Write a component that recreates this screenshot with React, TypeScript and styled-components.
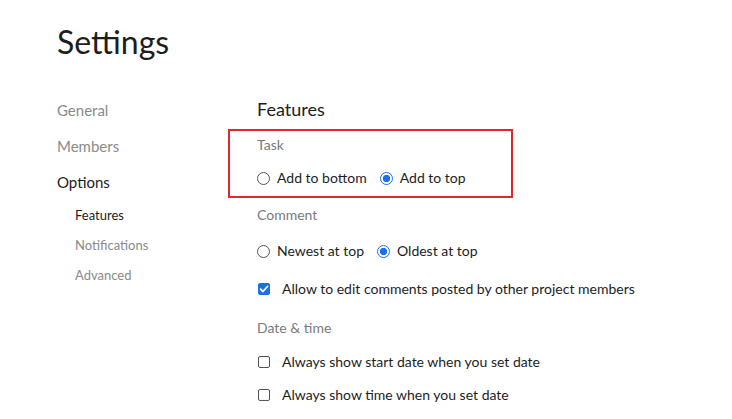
import styled, { createGlobalStyle } from 'styled-components';

const GlobalStyle = createGlobalStyle`
  body {
    margin: 0;
    background: #fff;
    font-family: Lato, "Open Sans", sans-serif;
    color: #222;
  }
`;

const nav = [
  { label: 'General', level: 0 },
  { label: 'Members', level: 0 },
  { label: 'Options', level: 0, active: true },
  { label: 'Features', level: 1, active: true },
  { label: 'Notifications', level: 1 },
  { label: 'Advanced', level: 1 },
];

const App = () => {
  return (
    <>
      <GlobalStyle />
      <Page>
        <Title>Settings</Title>
        <Layout>
          <Sidebar>
            {nav.map((item) => (
              <NavItem key={item.label} $level={item.level} $active={!!item.active}>
                {item.label}
              </NavItem>
            ))}
          </Sidebar>

          <Main>
            <Heading>Features</Heading>

            <Group $highlight $gap={14}>
              <GroupLabel>Task</GroupLabel>
              <OptionRow $gap={12}>
                <Choice>
                  <Radio name="task" />
                  Add to bottom
                </Choice>
                <Choice>
                  <Radio name="task" defaultChecked />
                  Add to top
                </Choice>
              </OptionRow>
            </Group>

            <Group $gap={16}>
              <GroupLabel>Comment</GroupLabel>
              <OptionRow $gap={15}>
                <Choice>
                  <Radio name="comment" />
                  Newest at top
                </Choice>
                <Choice>
                  <Radio name="comment" defaultChecked />
                  Oldest at top
                </Choice>
              </OptionRow>
              <CheckRow $gap={16}>
                <Checkbox defaultChecked />
                Allow to edit comments posted by other project members
              </CheckRow>
            </Group>

            <Group $gap={18}>
              <GroupLabel>Date &amp; time</GroupLabel>
              <CheckRow $gap={13}>
                <Checkbox />
                Always show start date when you set date
              </CheckRow>
              <CheckRow $gap={11}>
                <Checkbox />
                Always show time when you set date
              </CheckRow>
            </Group>
          </Main>
        </Layout>
      </Page>
    </>
  );
};

export default App;

const Page = styled.div`
  padding: 20px 0 0 57px;
`;

const Title = styled.h1`
  margin: 0;
  font-size: 32px;
  font-weight: 400;
  line-height: 44px;
  color: #1d1d1d;
`;

const Layout = styled.div`
  display: grid;
  grid-template-columns: 200px 1fr;
  margin-top: 31px;
`;

const Sidebar = styled.nav`
  display: flex;
  flex-direction: column;
  margin-top: -3px;
`;

const NavItem = styled.div<{ $level: number; $active: boolean }>`
  padding-left: ${(p) => (p.$level ? 18 : 0)}px;
  font-size: ${(p) => (p.$level ? 13 : 15)}px;
  line-height: ${(p) => (p.$level ? 30 : 36)}px;
  color: ${(p) => (p.$active ? '#1d1d1d' : '#8a8a8a')};
`;

const Main = styled.section`
  display: flex;
  flex-direction: column;
  padding-top: 2px;
`;

const Heading = styled.h2`
  margin: 0;
  font-size: 18px;
  font-weight: 400;
  line-height: 24px;
  color: #1d1d1d;
`;

const Group = styled.div<{ $highlight?: boolean; $gap: number }>`
  position: relative;
  display: flex;
  flex-direction: column;
  margin-top: ${(p) => p.$gap}px;

  ${(p) =>
    p.$highlight &&
    `
    &::before {
      content: '';
      position: absolute;
      left: -29px;
      top: -6px;
      width: 285px;
      bottom: -9px;
      border: 2px solid #e3262b;
      box-sizing: border-box;
      pointer-events: none;
    }
  `}
`;

const GroupLabel = styled.div`
  font-size: 14px;
  line-height: 20px;
  color: #7a7a7a;
`;

const OptionRow = styled.div<{ $gap: number }>`
  display: flex;
  gap: 13px;
  margin-top: ${(p) => p.$gap}px;
`;

const Choice = styled.label`
  display: flex;
  align-items: center;
  gap: 7px;
  font-size: 14px;
  line-height: 22px;
  color: #1d1d1d;
`;

const Radio = styled.input.attrs({ type: 'radio' })`
  appearance: none;
  margin: 0;
  width: 13px;
  height: 13px;
  border-radius: 50%;
  border: 1px solid #555;
  background: #fff;
  box-sizing: border-box;

  &:checked {
    border: 1.5px solid #1a6ff0;
    background: radial-gradient(circle, #1a6ff0 0 3.4px, #fff 3.9px);
  }
`;

const CheckRow = styled.label<{ $gap: number }>`
  display: flex;
  align-items: center;
  gap: 12px;
  margin-top: ${(p) => p.$gap}px;
  padding-left: 1px;
  font-size: 14px;
  line-height: 22px;
  color: #1d1d1d;
`;

const Checkbox = styled.input.attrs({ type: 'checkbox' })`
  appearance: none;
  margin: 0;
  width: 12px;
  height: 12px;
  border-radius: 2px;
  border: 1px solid #555;
  background: #fff;
  box-sizing: border-box;

  &:checked {
    border-color: #1a6ff0;
    background: #1a6ff0
      url("data:image/svg+xml,%3Csvg xmlns='http://www.w3.org/2000/svg' viewBox='0 0 12 12'%3E%3Cpath d='M2.6 6.2l2.3 2.3 4.6-5' fill='none' stroke='white' stroke-width='1.8' stroke-linecap='round' stroke-linejoin='round'/%3E%3C/svg%3E")
      center / 12px no-repeat;
  }
`;
